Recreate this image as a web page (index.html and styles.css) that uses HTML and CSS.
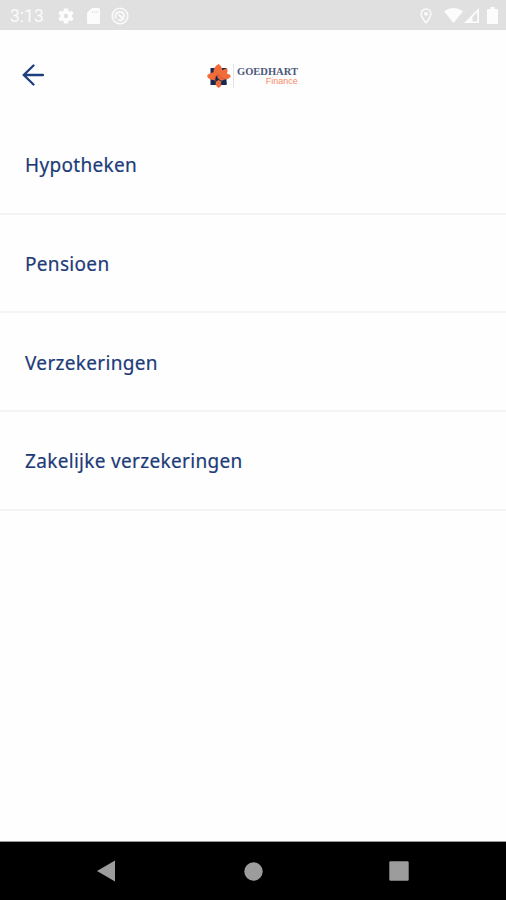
FILE: index.html
```
<!DOCTYPE html>
<html lang="nl">
	<head>
		<title>Goedhart Finance</title>
		<meta charset="UTF-8">
		<link rel="stylesheet" href="styles.css">
	</head>
	<body>
		<div class="statusbar">
			<span class="time">3:13</span>
			<svg class="icon gear" width="18" height="18" viewBox="0 0 24 24"><path fill-rule="evenodd" d="M19.600 13a7.500 7.500 0 0 0 0-2l2.600-1.900-2.300-4-2.900 1.200a7 7 0 0 0-1.700-1L14.800 2H9.200l-.5 3.300a7 7 0 0 0-1.700 1L4.100 5.100l-2.300 4L4.400 11a7.500 7.500 0 0 0 0 2l-2.600 1.900 2.300 4L7 17.700a7 7 0 0 0 1.700 1l.5 3.300h5.600l.5-3.300a7 7 0 0 0 1.700-1l2.900 1.200 2.300-4zM12 15a3 3 0 1 1 0-6 3 3 0 0 1 0 6z"/></svg>
			<svg class="icon card" width="13" height="16" viewBox="0 0 13 16"><path fill-rule="evenodd" d="M5 0h6.500Q13 0 13 1.500v13Q13 16 11.500 16h-10Q0 16 0 14.500V5zM5 3v2h1V3zM7.300 3v2h1V3zM9.600 3v2h1V3z"/></svg>
			<svg class="icon sync" width="18" height="18" viewBox="0 0 18 18"><circle class="line" cx="9" cy="9" r="7.800"/><path class="line thick" d="M5 11.500a4.400 4.400 0 0 1 7.800-4.300l.3 3.300M11.500 12.500a4 4 0 0 1-4.300 0M7.500 7.500l5.500 5"/></svg>
			<svg class="icon pin" width="12" height="16" viewBox="0 0 12 16"><path class="line" d="M6 1a4.800 4.800 0 0 0-4.800 4.800C1.200 9.300 6 14.800 6 14.800s4.800-5.500 4.800-9A4.800 4.800 0 0 0 6 1z"/><circle cx="6" cy="5.800" r="1.900"/></svg>
			<svg class="icon wifi" width="19" height="15" viewBox="0 0 19 15"><path d="M0 3.200Q9.500-3.200 19 3.200L9.500 15z"/></svg>
			<svg class="icon signal" width="15" height="15" viewBox="0 0 15 15"><path fill-rule="evenodd" d="M15 0v15H0zM13.300 4.200L8.500 9v4.500h4.800z"/></svg>
			<svg class="icon battery" width="11" height="17" viewBox="0 0 11 17"><path d="M3.500 0h4v2H10q1 0 1 1v13q0 1-1 1H1q-1 0-1-1V3q0-1 1-1h2.500z"/></svg>
		</div>

		<div class="header">
			<svg class="back" width="22" height="22" viewBox="0 0 22 22"><path d="M11.500 1.500L1.800 11l9.700 9.500M1.800 11H21"/></svg>
			<div class="logo">
				<svg width="24" height="24" viewBox="0 0 24 24">
					<path class="navy" d="M3.500 4h16v17h-16z"/>
					<path class="orange" d="M11.500 0Q15 2 15.500 6.500q2-2.500 5-1.500.5 3-1 4.500Q22.500 9.500 24 12q-2 3.500-6.500 3.500L14.500 17q2 4-3 7-4-3-2.500-6l-2-2q-5.500 0-7-4Q2 8.500 6.500 8.500 6.500 2.500 11.500 0z"/>
					<path class="navy" d="M8.500 18q-1-5 1.500-6.500.5 4 5.500 5.500l4 1v2.500h-6l1-3-3-1.500z"/>
					<path class="swirl" d="M7.500 15q.5-4 4-4.500 1.500 4 6 4.500"/>
				</svg>
				<div class="brand">
					<span class="name">GOEDHART</span>
					<span class="sub">Finance</span>
				</div>
			</div>
		</div>

		<div class="menu">
			<a class="item">Hypotheken</a>
			<a class="item">Pensioen</a>
			<a class="item">Verzekeringen</a>
			<a class="item">Zakelijke verzekeringen</a>
		</div>

		<div class="navbar">
			<svg width="18" height="22" viewBox="0 0 18 22"><path d="M0 11L18 .5v21z"/></svg>
			<svg class="home" width="19" height="19" viewBox="0 0 19 19"><circle cx="9.500" cy="9.500" r="9.200"/></svg>
			<svg width="20" height="20" viewBox="0 0 20 20"><rect x=".3" y=".3" width="19.400" height="19.400" rx="1.300"/></svg>
		</div>
	</body>
</html>
```
FILE: styles.css
```
*{
	box-sizing:border-box;
}
body{
	margin:0;
	height:900px;
	display:flex;
	flex-direction:column;
	background-color:#fefefe;
	font-family:"Noto Sans","Open Sans",sans-serif;
}
svg{
	display:block;
	flex:none;
}
.statusbar{
	display:flex;
	align-items:center;
	height:30px;
	padding:1px 8px 0 10px;
	background-color:#e0e0e0;
	color:#fafafa;
}
.time{
	width:47px;
	font-family:Roboto,sans-serif;
	font-size:17.500px;
}
.icon{
	fill:#fcfcfc;
}
.line{
	fill:none;
	stroke:#fafafa;
	stroke-width:1.600;
}
.thick{
	stroke-width:2;
}
.card{
	margin-left:12px;
}
.sync{
	margin-left:11px;
}
.pin{
	margin-left:auto;
}
.wifi{
	margin-left:12px;
}
.signal{
	margin-left:1px;
}
.battery{
	margin-left:8px;
}
.header{
	display:grid;
	grid-template-columns:1fr auto 1fr;
	align-items:center;
	height:86px;
	padding:4px 22px 0;
}
.back{
	fill:none;
	stroke:#1d3f7c;
	stroke-width:2.300;
	stroke-linecap:round;
}
.logo{
	display:flex;
	align-items:center;
	width:92px;
	padding-top:2px;
}
.navy{
	fill:#17284f;
}
.orange{
	fill:#f26c3a;
}
.swirl{
	fill:none;
	stroke:#c9563a;
	stroke-width:1;
}
.brand{
	display:flex;
	flex-direction:column;
	height:24px;
	margin-left:2px;
	padding:2px 0 0 3px;
	border-left:1px solid #e2e3e8;
}
.name{
	font:bold 10.500px/11px "Liberation Serif",serif;
	color:#4b597b;
}
.sub{
	font:9px/9px "Liberation Sans",sans-serif;
	text-align:right;
	color:#fa8a65;
}
.menu{
	flex:1;
}
.item{
	display:flex;
	align-items:center;
	height:98.700px;
	padding:2px 25px 0;
	border-bottom:2px solid #f4f4f4;
	font-size:19px;
	letter-spacing:.320px;
	color:#1d3b78;
	-webkit-text-stroke:.200px #1d3b78;
}
.navbar{
	display:flex;
	align-items:center;
	height:59px;
	padding:0 97px;
	justify-content:space-between;
	background-color:#000;
	border-top:1px solid #999;
	fill:#9c9c9c;
}
.home{
	margin-left:2px;
}
```
